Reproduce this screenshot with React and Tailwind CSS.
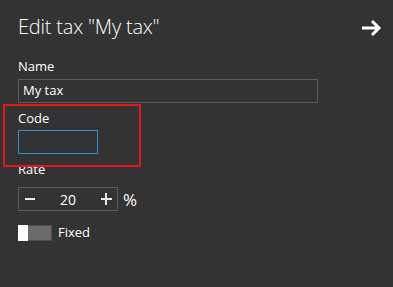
import { useState } from "react";

function Stepper({ value }) {
    return (
        <div className="flex items-center w-[100px] h-[24px] border border-[#5c5c5c]">
            <span className="w-[22px] flex justify-center">
                <span className="block w-[10px] h-[2px] bg-[#e8e8e8]" />
            </span>
            <span className="flex-1 text-center text-[14px] text-white">{value}</span>
            <span className="w-[22px] flex justify-center relative h-[12px]">
                <span className="absolute top-[5px] block w-[11px] h-[2px] bg-[#e8e8e8]" />
                <span className="absolute top-0 block w-[2px] h-[12px] bg-[#e8e8e8]" />
            </span>
        </div>
    );
}

export default function App() {
    const [fixed] = useState(false);

    return (
        <div
            className="relative w-[393px] h-[287px] bg-[#333333] text-white px-[18px] pt-[12px]"
            style={{ fontFamily: '"Open Sans", "Noto Sans", sans-serif' }}
        >
            <div className="flex items-center justify-between">
                <h1 className="text-[20px] font-light leading-[30px] tracking-[-0.2px]">
                    Edit tax "My tax"
                </h1>
                <svg width="21" height="18" viewBox="0 0 21 18" className="mr-[-7px] mt-[1px]">
                    <path d="M1 9 H18 M11 2 L18 9 L11 16" stroke="#fff" strokeWidth="3" fill="none" />
                </svg>
            </div>

            <div className="mt-[15px] text-[13px] leading-[18px]">Name</div>
            <div className="mt-[4px] w-[300px] h-[24px] border border-[#5c5c5c] flex items-center px-[4px] text-[13px]">
                My tax
            </div>

            <div className="mt-[6px] text-[13px] leading-[18px]">Code</div>
            <div className="mt-[3px] w-[80px] h-[24px] border border-[#2b92d5]" />

            <div className="mt-[6px] text-[13px] leading-[18px]">Rate</div>
            <div className="mt-[9px] flex items-center gap-[5px]">
                <Stepper value={20} />
                <span className="text-[17px] leading-none">%</span>
            </div>

            <div className="mt-[12px] flex items-center gap-[6px]">
                <div className="relative w-[34px] h-[16px] bg-[#6b6b6b] border border-[#4d4d4d]">
                    <span className={"absolute top-[-1px] h-[16px] w-[10px] bg-white " + (fixed ? "right-[-1px]" : "left-[-1px]")} />
                </div>
                <span className="text-[13px]">Fixed</span>
            </div>

            <div className="absolute left-[3px] top-[104px] w-[138px] h-[63px] border-2 border-[#e8151b]" />
        </div>
    );
}
